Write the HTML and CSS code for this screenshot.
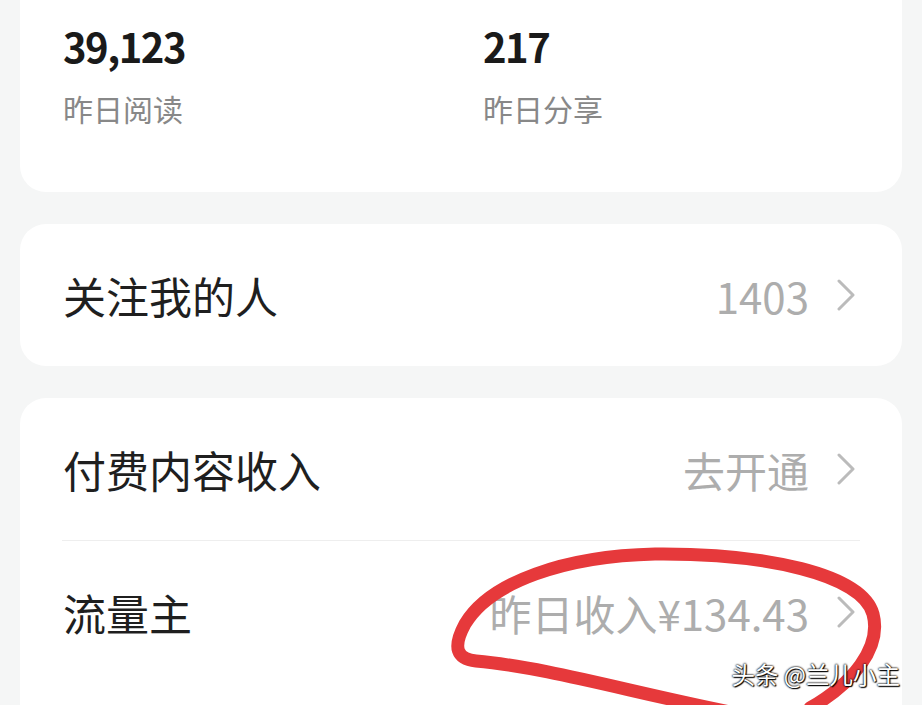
FILE: index.html
```html
<!DOCTYPE html>
<html lang="zh-CN">
<head>
    <meta charset="UTF-8">
    <meta name="viewport" content="width=device-width, initial-scale=1.0">
    <title>数据</title>
    <link rel="stylesheet" href="styles.css">
</head>
<body>
    <div class="page">
        <div class="card stats">
            <div class="stat">
                <div class="stat-num">39,123</div>
                <div class="stat-label">昨日阅读</div>
            </div>
            <div class="stat">
                <div class="stat-num">217</div>
                <div class="stat-label">昨日分享</div>
            </div>
        </div>

        <div class="card">
            <div class="row">
                <span class="row-title">关注我的人</span>
                <span class="row-value">1403</span>
                <svg class="chevron" viewBox="0 0 20 32"><path d="M3 2 L17 16 L3 30" /></svg>
            </div>
        </div>

        <div class="card card-last">
            <div class="row">
                <span class="row-title">付费内容收入</span>
                <span class="row-value">去开通</span>
                <svg class="chevron" viewBox="0 0 20 32"><path d="M3 2 L17 16 L3 30" /></svg>
            </div>
            <div class="divider"></div>
            <div class="row">
                <span class="row-title">流量主</span>
                <span class="row-value">昨日收入¥134.43</span>
                <svg class="chevron" viewBox="0 0 20 32"><path d="M3 2 L17 16 L3 30" /></svg>
            </div>
        </div>
    </div>

    <!-- hand-drawn circle around the income -->
    <svg class="scribble" viewBox="0 0 922 705">
        <path d="M810 708 C852 684, 882 648, 873 614 C862 574, 765 553, 655 554 C565 556, 490 582, 465 624 C452 648, 457 659, 476 661 C545 667, 630 692, 730 712" />
    </svg>

    <div class="watermark">头条 @兰儿小主</div>
</body>
</html>
```

FILE: styles.css
```css
body {
    margin: 0;
    background-color: #f5f6f6;
    font-family: "Noto Sans CJK SC", "Noto Sans", sans-serif;
    width: 922px;
    height: 705px;
    overflow: hidden;
    position: relative;
}
.page {
    padding: 0 20px;
    margin-top: -30px;
    display: flex;
    flex-direction: column;
    gap: 32px;
}
.card {
    background-color: white;
    border-radius: 26px;
}
.card-last {
    padding-bottom: 22px;
    border-bottom-left-radius: 0;
    border-bottom-right-radius: 0;
}
.stats {
    display: grid;
    grid-template-columns: 420px 1fr;
    padding: 51px 43px 0;
    box-sizing: border-box;
    height: 222px;
}
.stat-num {
    font-size: 40px;
    font-weight: bold;
    color: #1a1a1a;
    line-height: 50px;
    letter-spacing: -1.5px;
}
.stat-label {
    font-size: 30px;
    color: #888;
    margin-top: 17px;
    line-height: 40px;
}
.row {
    display: flex;
    align-items: center;
    height: 142px;
    padding: 0 46px 0 43px;
}
.row-title {
    flex: 1;
    font-size: 43px;
    color: #1f1f1f;
}
.row-value {
    font-size: 42px;
    color: #adadad;
}
.chevron {
    width: 20px;
    height: 32px;
    margin-left: 27px;
    fill: none;
    stroke: #bbb;
    stroke-width: 3;
    stroke-linecap: round;
    stroke-linejoin: round;
}
.divider {
    height: 1px;
    background-color: #eee;
    margin: 0 42px;
}
.scribble {
    position: absolute;
    left: 0;
    top: 0;
    width: 922px;
    height: 705px;
    fill: none;
    stroke: #e6393b;
    stroke-width: 13;
    stroke-linecap: round;
    stroke-linejoin: round;
}
.watermark {
    position: absolute;
    right: 22px;
    bottom: 14px;
    font-size: 23.5px;
    color: white;
    text-shadow: 0 0 2px #000, 0 0 2px #000, 1px 1px 1px #000;
}
```
